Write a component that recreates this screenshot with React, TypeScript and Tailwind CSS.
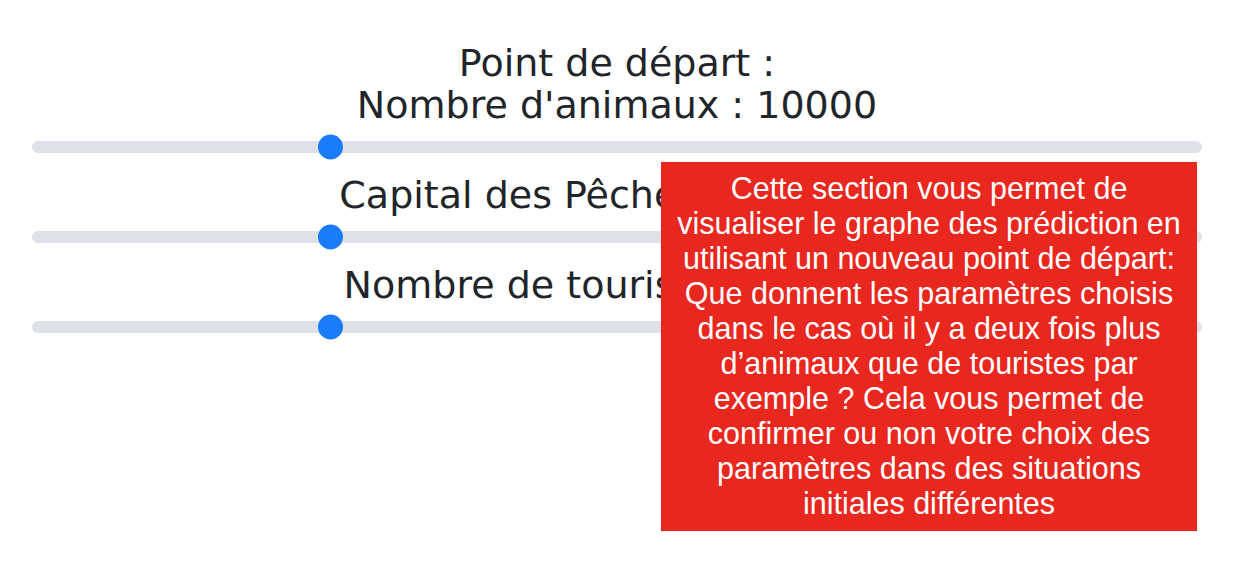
import React from "react";

function Slider({ label }: { label: React.ReactNode }) {
  return (
    <div className="flex flex-col items-center">
      <div className="text-center text-[38px] leading-[42px] text-[#212529]">{label}</div>
      <div className="relative mt-[15px] h-[12px] w-full rounded-full bg-[#dee2e6]">
        <span className="absolute left-[286px] top-1/2 h-[25px] w-[25px] -translate-y-1/2 rounded-full bg-[#1a7cfb]" />
      </div>
    </div>
  );
}

export default function App() {
  return (
    <div className="relative h-[574px] w-[1234px] bg-white font-['DejaVu_Sans',sans-serif]">
      <div className="flex flex-col gap-[21px] pl-[32px] pr-[32px] pt-[42px]">
        <Slider
          label={
            <>
              Point de départ :
              <br />
              Nombre d'animaux : 10000
            </>
          }
        />
        <Slider label="Capital des Pêcheurs : 50000" />
        <Slider label="Nombre de touristes : 50000" />
      </div>
      <div className="absolute left-[661px] top-[162px] w-[536px] bg-[#e8271f] px-[12px] pb-[10px] pt-[9px] text-center font-['Liberation_Sans',Arial,sans-serif] text-[30.5px] leading-[35px] text-white">
        Cette section vous permet de visualiser le graphe des prédiction en utilisant un nouveau point de départ: Que donnent les paramètres choisis dans le cas où il y a deux fois plus d’animaux que de touristes par exemple ? Cela vous permet de confirmer ou non votre choix des paramètres dans des situations initiales différentes
      </div>
    </div>
  );
}
